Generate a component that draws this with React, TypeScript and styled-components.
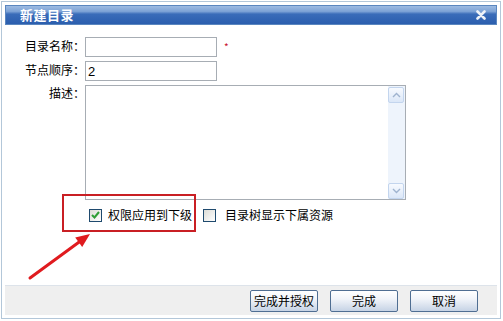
import React from "react";
import styled, { createGlobalStyle } from "styled-components";

const GlobalStyle = createGlobalStyle`
  html, body { margin: 0; padding: 0; background: #ffffff; }
  body { font-family: "Noto Sans CJK SC", "Noto Sans", sans-serif; font-size: 12px; color: #000; }
  * { box-sizing: border-box; }
`;

const Frame = styled.div`
  position: relative;
  margin: 1px 0 0 1px;
  width: 500px;
  height: 318px;
  border: 1px solid #b3c7d9;
  padding: 3px;
  display: flex;
  flex-direction: column;
  background: #fff;
`;

const TitleBar = styled.div`
  height: 20px;
  display: flex;
  align-items: center;
  justify-content: space-between;
  padding: 0 10px 0 14px;
  border: 1px solid #5a86bf;
  background: linear-gradient(to bottom, #9cbbe2 0%, #7ea3d6 30%, #3a6cb9 45%, #2b5eae 100%);
`;

const Title = styled.span`
  color: #ffffff;
  font-weight: bold;
  font-size: 13px;
  letter-spacing: 0.5px;
  line-height: 18px;
`;

const CloseIcon = styled.svg`
  width: 10px;
  height: 10px;
  display: block;
`;

const Body = styled.div`
  flex: 1;
  display: flex;
  flex-direction: column;
  padding-top: 12px;
`;

const FormGrid = styled.div`
  display: grid;
  grid-template-columns: 80px auto;
  row-gap: 4px;
  align-items: start;
`;

const Label = styled.label`
  text-align: right;
  font-size: 12px;
  line-height: 14px;
  padding-top: ${(p: { $top?: number }) => p.$top ?? 2}px;
  color: #000;
`;

const FieldRow = styled.div`
  display: flex;
  align-items: center;
`;

const TextInput = styled.input`
  width: 132px;
  height: 20px;
  border: 1px solid #a7adb4;
  padding: 0 2px;
  font-family: "Liberation Sans", Arial, sans-serif;
  font-size: 13px;
  outline: none;
  color: #000;
`;

const Required = styled.span`
  color: #c8102e;
  font-size: 10px;
  margin-left: 7px;
  line-height: 10px;
`;

const AreaBox = styled.div`
  width: 321px;
  height: 115px;
  border: 1px solid #a7adb4;
  display: flex;
`;

const Area = styled.textarea`
  flex: 1;
  border: none;
  resize: none;
  outline: none;
  overflow: hidden;
`;

const ScrollBar = styled.div`
  width: 17px;
  background: #eef4fc;
  display: flex;
  flex-direction: column;
  justify-content: space-between;
  padding: 1px 1px 0 0;
`;

const ScrollBtn = styled.div`
  height: 16px;
  border: 1px solid #c3d5ee;
  border-radius: 2px;
  background: linear-gradient(to bottom, #f7faff, #dbe7f8);
  display: flex;
  align-items: center;
  justify-content: center;
`;

const CheckRow = styled.div`
  display: flex;
  align-items: center;
  margin-top: 8px;
  padding-left: 84px;
  height: 14px;
`;

const CheckItem = styled.div<{ $gap: number; $ml?: number }>`
  display: flex;
  align-items: center;
  gap: ${(p) => p.$gap}px;
  margin-left: ${(p) => p.$ml ?? 0}px;
  font-size: 12px;
  line-height: 14px;
`;

const Box = styled.span`
  width: 13px;
  height: 13px;
  border: 1px solid #1f4a6e;
  background: linear-gradient(135deg, #dcdcd6, #ffffff);
  display: flex;
  align-items: center;
  justify-content: center;
`;

const Footer = styled.div`
  margin-top: auto;
  height: 30px;
  background: #efefef;
  border-top: 1px solid #dde3ea;
  display: flex;
  align-items: center;
  justify-content: flex-end;
  gap: 12px;
  padding: 1px 19px 0 0;
`;

const Button = styled.button`
  width: 68px;
  height: 22px;
  border: 1px solid #4f6e92;
  border-radius: 2px;
  background: linear-gradient(to bottom, #ffffff 0%, #f1f4f9 40%, #c6d3e5 100%);
  font-family: "Noto Sans CJK SC", sans-serif;
  font-size: 12px;
  color: #000;
  padding: 0;
  line-height: 20px;
`;

const RedBox = styled.div`
  position: absolute;
  left: 60px;
  top: 192px;
  width: 134px;
  height: 38px;
  border: 2px solid #c91f24;
  pointer-events: none;
`;

const Arrow = styled.svg`
  position: absolute;
  left: 24px;
  top: 226px;
  width: 70px;
  height: 56px;
  overflow: visible;
`;

const Chevron = ({ up }: { up?: boolean }) => (
  <svg width="9" height="6" viewBox="0 0 9 6">
    <path
      d={up ? "M1 5 L4.5 1.5 L8 5" : "M1 1 L4.5 4.5 L8 1"}
      fill="none"
      stroke="#9fb3cf"
      strokeWidth="1.4"
    />
  </svg>
);

export default function App() {
  return (
    <>
      <GlobalStyle />
      <Frame>
        <TitleBar>
          <Title>新建目录</Title>
          <CloseIcon viewBox="0 0 10 10">
            <path d="M1.5 1.5 L8.5 8.5 M8.5 1.5 L1.5 8.5" stroke="#eef2f8" strokeWidth="2.6" strokeLinecap="round" />
          </CloseIcon>
        </TitleBar>
        <Body>
          <FormGrid>
            <Label>目录名称：</Label>
            <FieldRow>
              <TextInput defaultValue="" />
              <Required>*</Required>
            </FieldRow>
            <Label>节点顺序：</Label>
            <FieldRow>
              <TextInput defaultValue="2" />
            </FieldRow>
            <Label $top={1}>描述：</Label>
            <AreaBox>
              <Area />
              <ScrollBar>
                <ScrollBtn>
                  <Chevron up />
                </ScrollBtn>
                <ScrollBtn>
                  <Chevron />
                </ScrollBtn>
              </ScrollBar>
            </AreaBox>
          </FormGrid>
          <CheckRow>
            <CheckItem $gap={6}>
              <Box>
                <svg width="9" height="8" viewBox="0 0 9 8">
                  <path d="M1 4 L3.5 6.5 L8 1" fill="none" stroke="#2f9e35" strokeWidth="2" />
                </svg>
              </Box>
              <span>权限应用到下级</span>
            </CheckItem>
            <CheckItem $gap={9} $ml={11}>
              <Box />
              <span>目录树显示下属资源</span>
            </CheckItem>
          </CheckRow>
          <Footer>
            <Button>完成并授权</Button>
            <Button>完成</Button>
            <Button>取消</Button>
          </Footer>
        </Body>
        <RedBox />
        <Arrow viewBox="0 0 70 56">
          <line x1="4" y1="50" x2="53.5" y2="13.8" stroke="#e01b1f" strokeWidth="3" strokeLinecap="round" />
          <polygon points="64,6 56.2,19.1 49.2,9.5" fill="#e01b1f" />
        </Arrow>
      </Frame>
    </>
  );
}
